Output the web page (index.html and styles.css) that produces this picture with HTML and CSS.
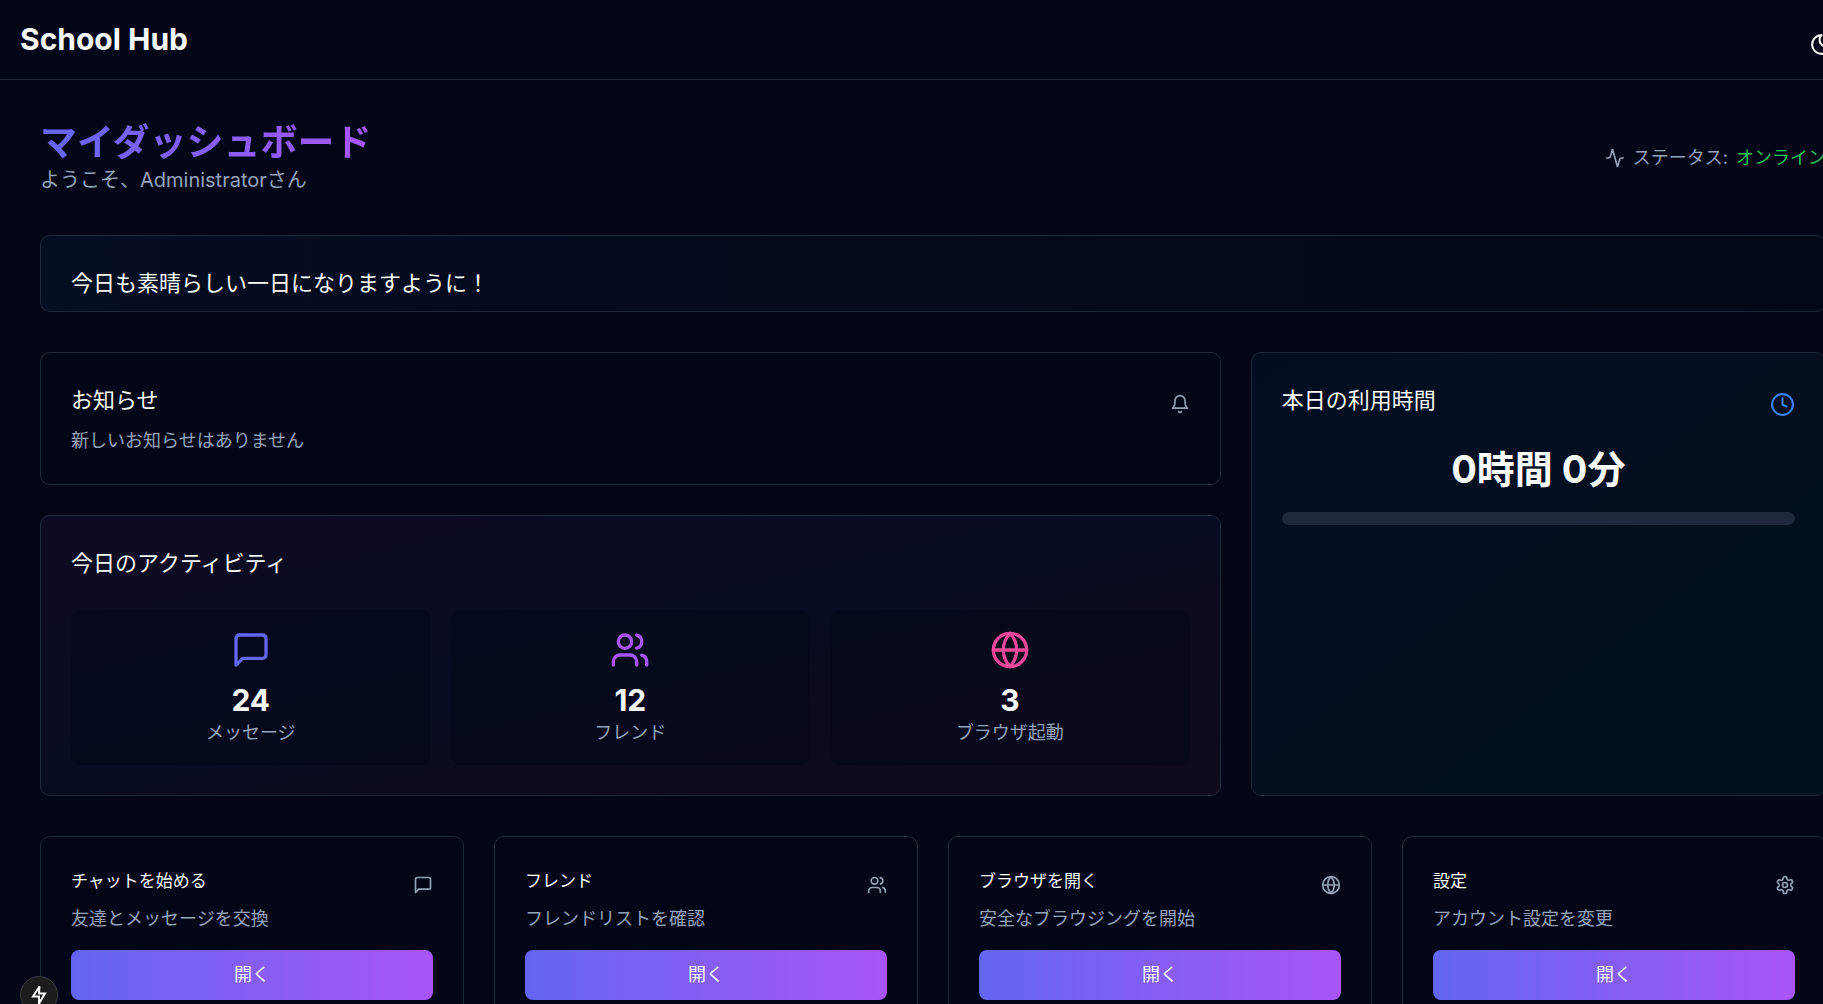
FILE: index.html
```html
<!DOCTYPE html>
<html lang="ja">
<head>
<meta charset="utf-8">
<meta name="viewport" content="width=device-width, initial-scale=1">
<title>School Hub</title>
<link rel="stylesheet" href="styles.css">
</head>
<body>
<svg class="sprite" aria-hidden="true">
  <symbol id="chat" viewBox="0 0 24 24"><path d="M21 15a2 2 0 0 1-2 2H7l-4 4V5a2 2 0 0 1 2-2h14a2 2 0 0 1 2 2z"/></symbol>
  <symbol id="users" viewBox="0 0 24 24"><path d="M16 21v-2a4 4 0 0 0-4-4H6a4 4 0 0 0-4 4v2"/><circle cx="9" cy="7" r="4"/><path d="M22 21v-2a4 4 0 0 0-3-3.87"/><path d="M16 3.13a4 4 0 0 1 0 7.75"/></symbol>
  <symbol id="globe" viewBox="0 0 24 24"><circle cx="12" cy="12" r="10"/><path d="M12 2a14.5 14.5 0 0 0 0 20 14.5 14.5 0 0 0 0-20"/><path d="M2 12h20"/></symbol>
  <symbol id="settings" viewBox="0 0 24 24"><path d="M12.22 2h-.44a2 2 0 0 0-2 2v.18a2 2 0 0 1-1 1.73l-.43.25a2 2 0 0 1-2 0l-.15-.08a2 2 0 0 0-2.73.73l-.22.38a2 2 0 0 0 .73 2.73l.15.1a2 2 0 0 1 1 1.72v.51a2 2 0 0 1-1 1.74l-.15.09a2 2 0 0 0-.73 2.73l.22.38a2 2 0 0 0 2.73.73l.15-.08a2 2 0 0 1 2 0l.43.25a2 2 0 0 1 1 1.73V20a2 2 0 0 0 2 2h.44a2 2 0 0 0 2-2v-.18a2 2 0 0 1 1-1.73l.43-.25a2 2 0 0 1 2 0l.15.08a2 2 0 0 0 2.73-.73l.22-.39a2 2 0 0 0-.73-2.73l-.15-.08a2 2 0 0 1-1-1.74v-.5a2 2 0 0 1 1-1.74l.15-.09a2 2 0 0 0 .73-2.73l-.22-.38a2 2 0 0 0-2.73-.73l-.15.08a2 2 0 0 1-2 0l-.43-.25a2 2 0 0 1-1-1.73V4a2 2 0 0 0-2-2z"/><circle cx="12" cy="12" r="3"/></symbol>
  <symbol id="bell" viewBox="0 0 24 24"><path d="M6 8a6 6 0 0 1 12 0c0 7 3 9 3 9H3s3-2 3-9"/><path d="M10.3 21a1.94 1.94 0 0 0 3.4 0"/></symbol>
  <symbol id="clock" viewBox="0 0 24 24"><circle cx="12" cy="12" r="10"/><path d="M12 6v6l4 2"/></symbol>
  <symbol id="activity" viewBox="0 0 24 24"><path d="M22 12h-2.48a2 2 0 0 0-1.93 1.46l-2.35 8.36a.25.25 0 0 1-.48 0L9.24 2.18a.25.25 0 0 0-.48 0l-2.35 8.36A2 2 0 0 1 4.49 12H2"/></symbol>
  <symbol id="moon" viewBox="0 0 24 24"><path d="M12 3a6 6 0 0 0 9 9 9 9 0 1 1-9-9Z"/></symbol>
</svg>

<div class="app">
  <header class="topbar">
    <div class="brand">School Hub</div>
    <button class="theme-toggle" type="button" aria-label="テーマ切替"><svg class="icon icon-md"><use href="#moon"/></svg></button>
  </header>

  <main class="main">
    <div class="page-head">
      <div>
        <h1 class="page-title">マイダッシュボード</h1>
        <p class="welcome">ようこそ、Administratorさん</p>
      </div>
      <div class="status">
        <svg class="icon icon-sm"><use href="#activity"/></svg>
        <span>ステータス:</span>
        <span class="online">オンライン</span>
      </div>
    </div>

    <section class="card banner"><h2 class="card-title">今日も素晴らしい一日になりますように！</h2></section>

    <div class="overview">
      <div class="overview-main">
        <section class="card">
          <div class="card-head">
            <h2 class="card-title">お知らせ</h2>
            <svg class="icon icon-sm muted"><use href="#bell"/></svg>
          </div>
          <p class="card-text">新しいお知らせはありません</p>
        </section>

        <section class="card activity">
          <div class="card-head"><h2 class="card-title">今日のアクティビティ</h2></div>
          <div class="stats">
            <div class="stat">
              <svg class="icon icon-lg indigo"><use href="#chat"/></svg>
              <div class="stat-value">24</div>
              <div class="stat-label">メッセージ</div>
            </div>
            <div class="stat">
              <svg class="icon icon-lg purple"><use href="#users"/></svg>
              <div class="stat-value">12</div>
              <div class="stat-label">フレンド</div>
            </div>
            <div class="stat">
              <svg class="icon icon-lg pink"><use href="#globe"/></svg>
              <div class="stat-value">3</div>
              <div class="stat-label">ブラウザ起動</div>
            </div>
          </div>
        </section>
      </div>

      <section class="card usage">
        <div class="card-head">
          <h2 class="card-title">本日の利用時間</h2>
          <svg class="icon icon-md blue"><use href="#clock"/></svg>
        </div>
        <div class="usage-time">0時間 0分</div>
        <div class="progress" role="progressbar" aria-valuenow="0" aria-valuemin="0" aria-valuemax="100" aria-label="利用時間"></div>
      </section>
    </div>

    <div class="actions">
      <section class="card">
        <div class="card-head">
          <h3 class="action-title">チャットを始める</h3>
          <svg class="icon icon-sm muted"><use href="#chat"/></svg>
        </div>
        <p class="card-text">友達とメッセージを交換</p>
        <button class="open" type="button">開く</button>
      </section>
      <section class="card">
        <div class="card-head">
          <h3 class="action-title">フレンド</h3>
          <svg class="icon icon-sm muted"><use href="#users"/></svg>
        </div>
        <p class="card-text">フレンドリストを確認</p>
        <button class="open" type="button">開く</button>
      </section>
      <section class="card">
        <div class="card-head">
          <h3 class="action-title">ブラウザを開く</h3>
          <svg class="icon icon-sm muted"><use href="#globe"/></svg>
        </div>
        <p class="card-text">安全なブラウジングを開始</p>
        <button class="open" type="button">開く</button>
      </section>
      <section class="card">
        <div class="card-head">
          <h3 class="action-title">設定</h3>
          <svg class="icon icon-sm muted"><use href="#settings"/></svg>
        </div>
        <p class="card-text">アカウント設定を変更</p>
        <button class="open" type="button">開く</button>
      </section>
    </div>
  </main>
</div>

<button class="dev-badge" type="button" aria-label="開発ツール">
  <svg viewBox="0 0 20 20" width="20" height="20" fill="none" stroke="#fff" stroke-width="2"><path d="M10.5 1.5 4 11.5h6v7l6-10h-6z"/></svg>
</button>
</body>
</html>
```
FILE: styles.css
```css
:root {
  --bg: #020617;
  --border: #1e293b;
  --text: #f8fafc;
  --muted: #94a3b8;
}

* { box-sizing: border-box; }

body {
  margin: 0;
  overflow-x: clip;
  background: var(--bg);
  color: var(--text);
  font: 400 18px/26px Inter, "Noto Sans CJK JP", sans-serif;
}

h1, h2, h3, p { margin: 0; font-weight: 400; }
button { font: inherit; border: 0; cursor: pointer; }

.sprite { display: none; }
.app { width: calc(100% + 43px); }

.icon {
  flex: none;
  fill: none;
  stroke: currentColor;
  stroke-width: 2;
  stroke-linecap: round;
  stroke-linejoin: round;
}
.icon-sm { width: 20px; height: 20px; }
.icon-md { width: 25px; height: 25px; }
.icon-lg { width: 40px; height: 40px; }
.muted { color: var(--muted); }
.blue { color: #3b82f6; }
.indigo { color: #6366f1; }
.purple { color: #a855f7; }
.pink { color: #ec4899; }

.topbar {
  display: flex;
  justify-content: space-between;
  align-items: flex-start;
  padding: 20px 20px 11px;
  border-bottom: 1px solid var(--border);
}
.brand { font-size: 30px; line-height: 38px; font-weight: 700; }
.theme-toggle {
  display: grid;
  place-items: center;
  width: 50px;
  height: 48px;
  padding: 0;
  background: none;
  color: var(--text);
}

.main {
  display: flex;
  flex-direction: column;
  gap: 40px;
  padding: 40px;
}

.page-head { display: flex; justify-content: space-between; align-items: center; }
.page-title {
  width: fit-content;
  font-size: 37px;
  line-height: 45px;
  font-weight: 700;
  color: transparent;
  background: linear-gradient(to right, #6366f1, #a855f7);
  background-clip: text;
}
.welcome { font-size: 20px; line-height: 30px; color: var(--muted); }
.status { display: flex; align-items: center; gap: 8px; color: var(--muted); }
.online { color: #22c55e; }

.card {
  padding: 30px;
  border: 1px solid var(--border);
  border-radius: 10px;
}
.card-head { display: flex; justify-content: space-between; align-items: center; margin-bottom: 3px; }
.card-title { font-size: 22px; line-height: 34px; }
.action-title { font-size: 17px; line-height: 28px; }
.card-head .card-title, .action-title { padding-bottom: 8px; }
.card-text { color: var(--muted); }

.banner {
  padding-bottom: 11px;
  background: linear-gradient(to right, #030e20, #050b1e 25%, #030817);
}

.overview { display: grid; grid-template-columns: repeat(3, 1fr); gap: 30px; }
.overview-main { grid-column: span 2; display: flex; flex-direction: column; gap: 30px; }

.activity { background: linear-gradient(to bottom right, #0b0b22, #080c20 50%, #100a1c); }
.stats { display: grid; grid-template-columns: repeat(3, 1fr); gap: 20px; margin-top: 22px; }
.stat {
  display: flex;
  flex-direction: column;
  align-items: center;
  padding: 20px;
  border-radius: 10px;
  background: rgb(2 6 23 / 50%);
}
.stat-value { margin-top: 10px; font-size: 30px; line-height: 40px; font-weight: 700; }
.stat-label { line-height: 25px; color: var(--muted); }

.usage { background: linear-gradient(to bottom right, #030d21, #030f1f 50%, #02111f); }
.usage-time {
  margin-top: 22px;
  text-align: center;
  font-size: 38px;
  line-height: 45px;
  font-weight: 700;
}
.progress { height: 13px; margin-top: 20px; border-radius: 7px; background: var(--border); }

.actions { display: grid; grid-template-columns: repeat(4, 1fr); gap: 30px; }
.open {
  display: block;
  width: 100%;
  height: 50px;
  margin-top: 18px;
  border-radius: 8px;
  color: var(--text);
  background: linear-gradient(to right, #6366f1, #a855f7);
}

/* Floating developer tools button, hangs over the lower left corner */
.dev-badge {
  position: fixed;
  left: 20px;
  bottom: -10px;
  display: grid;
  place-items: center;
  width: 38px;
  height: 38px;
  padding: 0;
  border: 1px solid #3a3a3c;
  border-radius: 50%;
  background: #1c1c1d;
}
```
